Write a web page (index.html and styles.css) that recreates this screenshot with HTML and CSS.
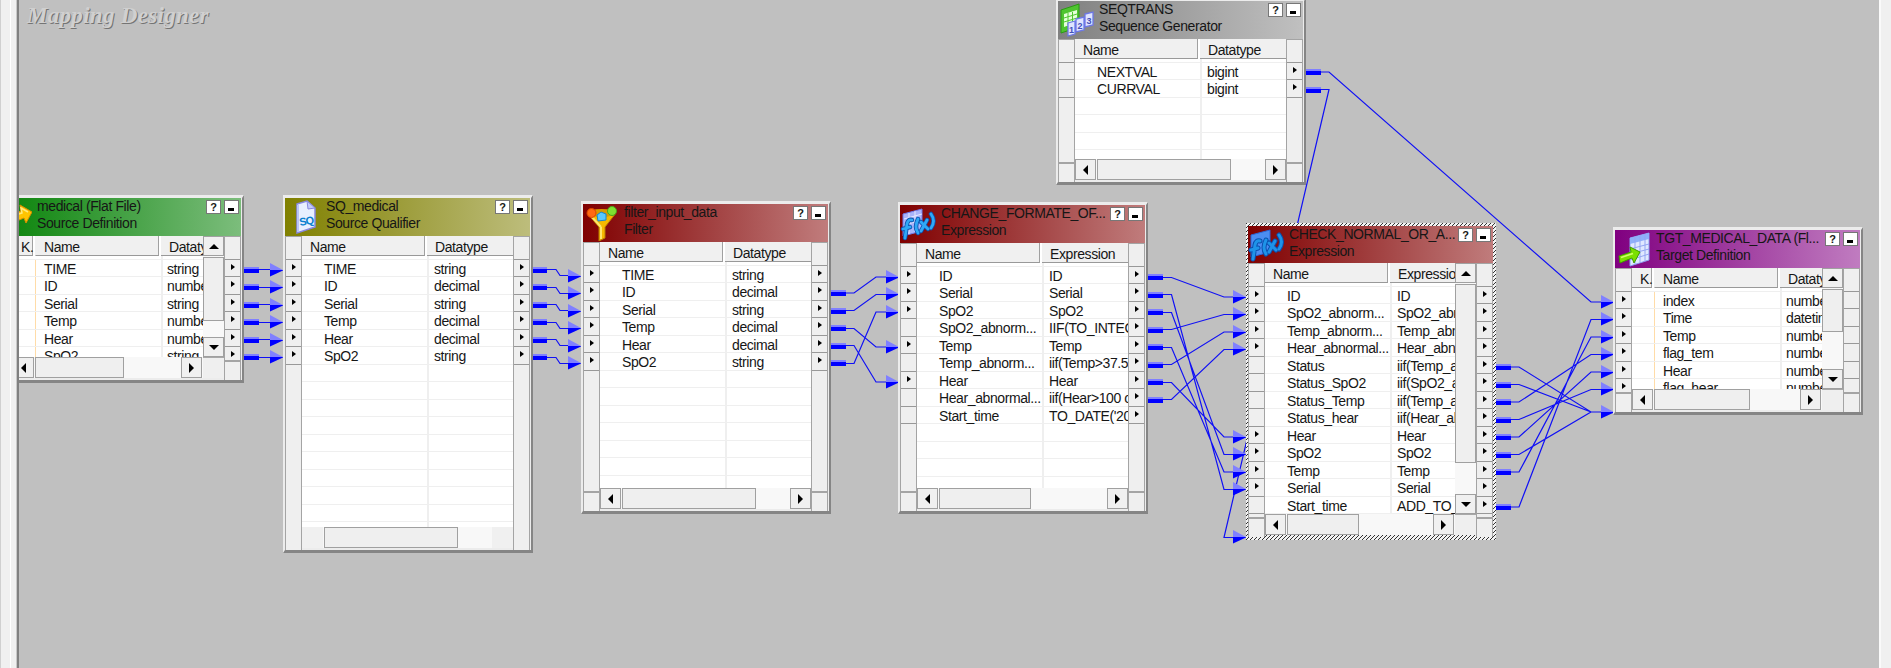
FILE: index.html
```html
<!DOCTYPE html>
<html lang="en">
<head>
<meta charset="utf-8">
<title>Mapping Designer</title>
<link rel="stylesheet" href="styles.css">
</head>
<body>
<div class="app">
<div class="rail"><i></i></div>
<main class="canvas">
<h1 class="heading">Mapping Designer</h1>

<svg class="wires" width="1860" height="668" viewBox="19 0 1860 668">
<defs>
<g id="s"><rect y="-3" width="15" height="2" fill="#8080ff"/><rect y="-1" width="15" height="4" fill="#00f"/></g>
<g id="a"><path d="M-13-7V0H0z" fill="#8080ff"/><path d="M-13 0V6.500L0 .5V0z" fill="#00f"/></g>
</defs>
<g class="lines">
<path d="M244 269.500H272M244 287.500H272M244 304.500H272M244 322.500H272M244 339.500H272M244 357.500H272"/>
<path d="M533 269.500H556L560 275.500H570M533 287.500H556L560 293.500H570M533 304.500H556L560 310.500H570M533 322.500H556L560 328.500H570M533 339.500H556L560 345.500H570M533 357.500H556L560 363.500H570"/>
<path d="M832 293H854L876 277H888M832 310.500H854L876 294.500H888M832 328.500H854L876 347H888M832 345.500H854L876 382H888M832 363.500H854L876 312H888"/>
<path d="M1148 277.500H1171.500L1224 297H1235M1148 294.500H1171.500L1224 489.500H1235M1148 312.500H1171.500L1224 454.500H1235M1148 329.500H1171.500L1224 314.500H1235M1148 347.500H1171.500L1224 472H1235M1148 364.500H1171.500L1224 332H1235M1148 382.500H1171.500L1224 437H1235M1148 399.500H1171.500L1224 349.500H1235"/>
<path d="M1306 72H1329L1591 302H1603M1306 89.500H1329L1224 537.500H1235"/>
<path d="M1496 367H1519L1591 412H1603M1496 384.500H1519L1591 412M1496 402H1519L1591 354.500H1603M1496 419.500H1519L1591 389.500H1603M1496 437H1519L1591 372H1603M1496 454.500H1519L1591 412M1496 472H1519L1591 337H1603M1496 507H1519L1591 319.500H1603"/>
</g>
<use href="#s" x="244" y="270"/><use href="#s" x="244" y="287"/><use href="#s" x="244" y="305"/><use href="#s" x="244" y="322"/><use href="#s" x="244" y="340"/><use href="#s" x="244" y="357"/>
<use href="#a" x="283" y="270"/><use href="#a" x="283" y="287"/><use href="#a" x="283" y="305"/><use href="#a" x="283" y="322"/><use href="#a" x="283" y="340"/><use href="#a" x="283" y="357"/>
<use href="#s" x="532" y="270"/><use href="#s" x="532" y="287"/><use href="#s" x="532" y="305"/><use href="#s" x="532" y="322"/><use href="#s" x="532" y="340"/><use href="#s" x="532" y="357"/>
<use href="#a" x="581" y="276"/><use href="#a" x="581" y="293"/><use href="#a" x="581" y="311"/><use href="#a" x="581" y="328"/><use href="#a" x="581" y="346"/><use href="#a" x="581" y="363"/>
<use href="#s" x="831" y="293"/><use href="#s" x="831" y="311"/><use href="#s" x="831" y="328"/><use href="#s" x="831" y="346"/><use href="#s" x="831" y="363"/>
<use href="#a" x="899" y="277"/><use href="#a" x="899" y="294"/><use href="#a" x="899" y="312"/><use href="#a" x="899" y="347"/><use href="#a" x="899" y="382"/>
<use href="#s" x="1148" y="277"/><use href="#s" x="1148" y="295"/><use href="#s" x="1148" y="312"/><use href="#s" x="1148" y="330"/><use href="#s" x="1148" y="347"/><use href="#s" x="1148" y="365"/><use href="#s" x="1148" y="382"/><use href="#s" x="1148" y="400"/>
<use href="#a" x="1246" y="297"/><use href="#a" x="1246" y="314"/><use href="#a" x="1246" y="332"/><use href="#a" x="1246" y="349"/><use href="#a" x="1246" y="437"/><use href="#a" x="1246" y="454"/><use href="#a" x="1246" y="472"/><use href="#a" x="1246" y="489"/><use href="#a" x="1246" y="537"/>
<use href="#s" x="1306" y="72"/><use href="#s" x="1306" y="90"/>
<use href="#s" x="1496" y="367"/><use href="#s" x="1496" y="385"/><use href="#s" x="1496" y="402"/><use href="#s" x="1496" y="420"/><use href="#s" x="1496" y="437"/><use href="#s" x="1496" y="455"/><use href="#s" x="1496" y="472"/><use href="#s" x="1496" y="507"/>
<use href="#a" x="1614" y="302"/><use href="#a" x="1614" y="319"/><use href="#a" x="1614" y="337"/><use href="#a" x="1614" y="354"/><use href="#a" x="1614" y="372"/><use href="#a" x="1614" y="389"/><use href="#a" x="1614" y="412"/>
</svg>

<section class="win w-medical">
<header class="title green">
<svg class="icon" viewBox="0 0 36 36"><path d="M16 15l9-3-1-6 12 7-6 11-2-5-12 5z" fill="#ffc400" stroke="#d98a00"/><path d="M17 17l9-3-1-5 7 4" fill="none" stroke="#ffe97a" stroke-width="1.500"/></svg>
<div class="names"><b>medical (Flat File)</b><b>Source Definition</b></div><div class="tools"><span>?</span><span class="min"></span></div></header>
<div class="body">
<div class="ports"><i></i><em></em></div>
<div class="content"><div class="view"><div class="table three">
<div class="row head"><span>K.</span><span>Name</span><span>Datatype</span></div>
<div class="row"><span></span><span>TIME</span><span>string</span></div>
<div class="row"><span></span><span>ID</span><span>number</span></div>
<div class="row"><span></span><span>Serial</span><span>string</span></div>
<div class="row"><span></span><span>Temp</span><span>number</span></div>
<div class="row"><span></span><span>Hear</span><span>number</span></div>
<div class="row"><span></span><span>SpO2</span><span>string</span></div>
</div><div class="vbar"><i class="up"></i><u class="t64"></u><i class="down"></i></div></div>
<div class="hbar"><i class="left"></i><u class="t88"></u><i class="right"></i><s></s></div></div>
<div class="ports"><i></i><p></p><p></p><p></p><p></p><p></p><p></p><em></em></div>
</div></section>

<section class="win w-sq">
<header class="title olive">
<svg class="icon" viewBox="0 0 36 36"><path d="M12 5l10-3 8 7v19L12 34z" fill="#e8efff" stroke="#8888e0" stroke-width="1.500"/><path d="M22 2l1 8 7-1z" fill="#c3ccf8" stroke="#8888e0"/><path d="M13 33V6" stroke="#b8c4f8" stroke-width="2"/><text x="15" y="27" class="sq" transform="rotate(-10 15 27)">SQ</text></svg>
<div class="names"><b>SQ_medical</b><b>Source Qualifier</b></div><div class="tools"><span>?</span><span class="min"></span></div></header>
<div class="body">
<div class="ports"><i></i><p></p><p></p><p></p><p></p><p></p><p></p></div>
<div class="content"><div class="view"><div class="table">
<div class="row head"><span>Name</span><span>Datatype</span></div>
<div class="row"><span>TIME</span><span>string</span></div>
<div class="row"><span>ID</span><span>decimal</span></div>
<div class="row"><span>Serial</span><span>string</span></div>
<div class="row"><span>Temp</span><span>decimal</span></div>
<div class="row"><span>Hear</span><span>decimal</span></div>
<div class="row"><span>SpO2</span><span>string</span></div>
<div class="row"></div><div class="row"></div><div class="row"></div><div class="row"></div><div class="row"></div><div class="row"></div><div class="row"></div><div class="row"></div><div class="row"></div><div class="row"></div>
</div></div>
<div class="hbar"><i class="none"></i><u class="t133"></u><i class="none"></i></div></div>
<div class="ports"><i></i><p></p><p></p><p></p><p></p><p></p><p></p></div>
</div></section>

<section class="win w-filter">
<header class="title red">
<svg class="icon" viewBox="0 0 36 36"><path d="M4 8h29L22 22v11l-6 3V22z" fill="#f5b800" stroke="#b97d00"/><ellipse cx="18.500" cy="8" rx="14" ry="4" fill="#d99a00"/><path d="M18 22v12" stroke="#ffe56b" stroke-width="2"/><path d="M8 11l10 11" stroke="#ffe56b" stroke-width="2"/><circle cx="8.500" cy="8" r="4.500" fill="#ff6a13" stroke="#d94400"/><circle cx="29" cy="6" r="4.500" fill="#7fe030" stroke="#4aa51a"/><path d="M14 10l4-3 5 2v6l-8 1z" fill="#58c8ff" stroke="#1687cc"/></svg>
<div class="names"><b>filter_input_data</b><b>Filter</b></div><div class="tools"><span>?</span><span class="min"></span></div></header>
<div class="body">
<div class="ports"><i></i><p></p><p></p><p></p><p></p><p></p><p></p><em></em></div>
<div class="content"><div class="view"><div class="table">
<div class="row head"><span>Name</span><span>Datatype</span></div>
<div class="row"><span>TIME</span><span>string</span></div>
<div class="row"><span>ID</span><span>decimal</span></div>
<div class="row"><span>Serial</span><span>string</span></div>
<div class="row"><span>Temp</span><span>decimal</span></div>
<div class="row"><span>Hear</span><span>decimal</span></div>
<div class="row"><span>SpO2</span><span>string</span></div>
<div class="row"></div><div class="row"></div><div class="row"></div><div class="row"></div><div class="row"></div><div class="row"></div><div class="row"></div>
</div></div>
<div class="hbar"><i class="left"></i><u class="t133"></u><i class="right"></i></div></div>
<div class="ports"><i></i><p></p><p></p><p></p><p></p><p></p><p></p><em></em></div>
</div></section>

<section class="win w-change">
<header class="title red">
<svg class="icon" viewBox="0 0 36 36"><path d="M3 8l19-5v22L3 30z" fill="#aab4fa" stroke="#6f7ae8"/><path d="M4 13l18-5M4 19l18-5M9 7v21M15 5v21" stroke="#e6eaff"/><g fill="none" stroke="#0a4fae" stroke-width="4.500" stroke-linecap="round"><path d="M12 14q-4-1-5 4L5 32M3 23l7-2M18 13q-4 8 0 14M21 16l7 7M27 14l-6 11M31 8q5 7 0 14"/></g><g fill="none" stroke="#2fa8f5" stroke-width="2.800" stroke-linecap="round"><path d="M12 14q-4-1-5 4L5 32M3 23l7-2M18 13q-4 8 0 14M21 16l7 7M27 14l-6 11M31 8q5 7 0 14"/></g></svg>
<div class="names"><b>CHANGE_FORMATE_OF...</b><b>Expression</b></div><div class="tools"><span>?</span><span class="min"></span></div></header>
<div class="body">
<div class="ports"><i></i><p></p><p></p><p></p><p class="no"></p><p></p><p class="no"></p><p></p><p class="no"></p><p class="no"></p><em></em></div>
<div class="content"><div class="view"><div class="table">
<div class="row head"><span>Name</span><span>Expression</span></div>
<div class="row"><span>ID</span><span>ID</span></div>
<div class="row"><span>Serial</span><span>Serial</span></div>
<div class="row"><span>SpO2</span><span>SpO2</span></div>
<div class="row"><span>SpO2_abnorm...</span><span>IIF(TO_INTEG</span></div>
<div class="row"><span>Temp</span><span>Temp</span></div>
<div class="row"><span>Temp_abnorm...</span><span>iif(Temp&gt;37.5</span></div>
<div class="row"><span>Hear</span><span>Hear</span></div>
<div class="row"><span>Hear_abnormal...</span><span>iif(Hear&gt;100 o</span></div>
<div class="row"><span>Start_time</span><span>TO_DATE('20</span></div>
<div class="row"></div><div class="row"></div><div class="row"></div><div class="row"></div>
</div></div>
<div class="hbar"><i class="left"></i><u class="t91"></u><i class="right"></i></div></div>
<div class="ports"><i></i><p></p><p></p><p></p><p></p><p></p><p></p><p></p><p></p><p></p><em></em></div>
</div></section>

<section class="win w-seq">
<header class="title gray">
<svg class="icon" viewBox="0 0 36 36"><path d="M3 8l18-6v23L3 31z" fill="#4fc52f" stroke="#2b9a14"/><path d="M6 12l13-4v12L6 25z" fill="#e5ffd9"/><path d="M6 16l13-4M6 20l13-4M10 11v12M14.500 10v11" stroke="#4fc52f"/><g fill="#dfe4ff" stroke="#6d78e6" stroke-width="1.300"><path d="M10 21l7-2v13l-7 2zM18 17l8-2v13l-8 2zM27 12l8-2v13l-8 2z"/></g><g class="digit"><text x="11" y="31">1</text><text x="19.500" y="27">2</text><text x="28.500" y="22">3</text></g></svg>
<div class="names"><b>SEQTRANS</b><b>Sequence Generator</b></div><div class="tools"><span>?</span><span class="min"></span></div></header>
<div class="body">
<div class="ports"><i></i><p class="no"></p><p class="no"></p><em></em></div>
<div class="content"><div class="view"><div class="table">
<div class="row head"><span>Name</span><span>Datatype</span></div>
<div class="row"><span>NEXTVAL</span><span>bigint</span></div>
<div class="row"><span>CURRVAL</span><span>bigint</span></div>
<div class="row"></div><div class="row"></div><div class="row"></div><div class="row"></div>
</div></div>
<div class="hbar"><i class="left"></i><u class="t133"></u><i class="right"></i></div></div>
<div class="ports"><i></i><p></p><p></p><em></em></div>
</div></section>

<section class="win w-check selected">
<header class="title red">
<svg class="icon" viewBox="0 0 36 36"><path d="M3 8l19-5v22L3 30z" fill="#4b8df2" stroke="#2a66d8"/><g fill="none" stroke="#0a4fae" stroke-width="5" stroke-linecap="round"><path d="M12 14q-4-1-5 4L5 32M3 23l7-2M18 13q-4 8 0 14M21 16l7 7M27 14l-6 11M31 8q5 7 0 14"/></g><g fill="none" stroke="#1e93e8" stroke-width="3" stroke-linecap="round"><path d="M12 14q-4-1-5 4L5 32M3 23l7-2M18 13q-4 8 0 14M21 16l7 7M27 14l-6 11M31 8q5 7 0 14"/></g></svg>
<div class="names"><b>CHECK_NORMAL_OR_A...</b><b>Expression</b></div><div class="tools"><span>?</span><span class="min"></span></div></header>
<div class="body">
<div class="ports"><i></i><p></p><p></p><p></p><p></p><p class="no"></p><p class="no"></p><p class="no"></p><p class="no"></p><p></p><p></p><p></p><p></p><p class="no"></p><em></em></div>
<div class="content"><div class="view"><div class="table">
<div class="row head"><span>Name</span><span>Expression</span></div>
<div class="row"><span>ID</span><span>ID</span></div>
<div class="row"><span>SpO2_abnorm...</span><span>SpO2_abn</span></div>
<div class="row"><span>Temp_abnorm...</span><span>Temp_abn</span></div>
<div class="row"><span>Hear_abnormal...</span><span>Hear_abn</span></div>
<div class="row"><span>Status</span><span>iif(Temp_a</span></div>
<div class="row"><span>Status_SpO2</span><span>iif(SpO2_a</span></div>
<div class="row"><span>Status_Temp</span><span>iif(Temp_a</span></div>
<div class="row"><span>Status_hear</span><span>iif(Hear_ab</span></div>
<div class="row"><span>Hear</span><span>Hear</span></div>
<div class="row"><span>SpO2</span><span>SpO2</span></div>
<div class="row"><span>Temp</span><span>Temp</span></div>
<div class="row"><span>Serial</span><span>Serial</span></div>
<div class="row"><span>Start_time</span><span>ADD_TO_</span></div>
</div><div class="vbar"><i class="up"></i><u class="t177"></u><i class="down"></i></div></div>
<div class="hbar"><i class="left"></i><u class="t71"></u><i class="right"></i><s></s></div></div>
<div class="ports"><i></i><p></p><p></p><p></p><p></p><p></p><p></p><p></p><p></p><p></p><p></p><p></p><p></p><p></p><em></em></div>
</div></section>

<section class="win w-tgt">
<header class="title purple">
<svg class="icon" viewBox="0 0 36 36"><path d="M15 7l19-5v27l-19 6z" fill="#dfe8ff" stroke="#8a9cf0"/><path d="M15 7l19-5v6l-19 5z" fill="#8fb0fa"/><path d="M15 18l19-5M15 23l19-5M15 29l19-6M20 6v27M25 4v27M30 3v27" stroke="#93a5f2"/><path d="M4 25l12-4-1-5 10 5-6 11-2-5-12 5z" fill="#7be000" stroke="#3f9a00"/><path d="M6 26.500l12-4" stroke="#d2ff6a" stroke-width="1.500"/></svg>
<div class="names"><b>TGT_MEDICAL_DATA (Fl...</b><b>Target Definition</b></div><div class="tools"><span>?</span><span class="min"></span></div></header>
<div class="body">
<div class="ports"><i></i><p></p><p></p><p></p><p></p><p></p><p></p><em></em></div>
<div class="content"><div class="view"><div class="table three">
<div class="row head"><span>K.</span><span>Name</span><span>Datatype</span></div>
<div class="row"><span></span><span>index</span><span>number</span></div>
<div class="row"><span></span><span>Time</span><span>datetim</span></div>
<div class="row"><span></span><span>Temp</span><span>number</span></div>
<div class="row"><span></span><span>flag_tem</span><span>number</span></div>
<div class="row"><span></span><span>Hear</span><span>number</span></div>
<div class="row"><span></span><span>flag_hear</span><span>number</span></div>
</div><div class="vbar"><i class="up"></i><u class="t42"></u><i class="down"></i></div></div>
<div class="hbar"><i class="left"></i><u class="t95"></u><i class="right"></i><s></s></div></div>
<div class="ports"><i></i><p class="no"></p><p class="no"></p><p class="no"></p><p class="no"></p><p class="no"></p><p class="no"></p><em></em></div>
</div></section>
</main>
</div>
</body>
</html>
```
FILE: styles.css
```css
* { box-sizing: border-box; }
body { margin: 0; background: #f0f0f0; font-family: "Liberation Sans", Arial, sans-serif; font-size: 14px; color: #161616; }
.app { display: flex; height: 668px; overflow: hidden; }
.rail { width: 17px; flex: none; border-left: 1px solid #d0d0d0; border-right: 1px solid #c8c8c8; background: #f0f0f0; padding-left: 9px; }
.rail i { display: block; width: 1px; height: 100%; background: #fff; }
.canvas { position: relative; width: 1864px; flex: none; overflow: hidden; background: #c0c0c0; border-left: 2px solid #808080; border-right: 2px solid #fafafa; }
.heading { margin: 3px 0 0 8px; font: italic bold 23px/26px "Liberation Serif", "Times New Roman", serif; letter-spacing: 0.300px; color: #d0d0d0; text-shadow: 1px 1px 0 #747474; }
.wires { position: absolute; left: 0; top: 0; }
.lines { fill: none; stroke: #1010f5; stroke-width: 1.200; }

/* Transformation windows placed on the free canvas */
.win { position: absolute; width: 250px; display: flex; flex-direction: column; border: solid; border-width: 3px 2px 3px 2px; border-color: #ececec #858585 #858585 #ececec; padding-right: 1px; background: #ececec; }
.w-medical { left: -25px; top: 195px; height: 188px; }
.w-sq { left: 264px; top: 195px; height: 358px; }
.w-filter { left: 562px; top: 201px; height: 313px; }
.w-change { left: 879px; top: 202px; height: 312px; }
.w-seq { left: 1037px; top: -2px; height: 187px; }
.w-check { left: 1227px; top: 223px; height: 317px; }
.w-tgt { left: 1594px; top: 227px; height: 188px; }
.selected { border: 0; padding: 3px 3px 3px 2px; background: repeating-linear-gradient(135deg, #333 0 1px, #f2f2f2 1px 2.830px); }

.title { height: 38px; flex: none; display: flex; }
.selected .title { height: 37px; }
.green { background: linear-gradient(90deg, #078207, #7cbd7c); }
.olive { background: linear-gradient(90deg, #808000, #bdbd7c); }
.red { background: linear-gradient(90deg, #800000, #c07c7c); }
.gray { background: linear-gradient(90deg, #808080, #c0c0c0); }
.purple { background: linear-gradient(90deg, #800080, #c07cc0); }
.icon { width: 36px; height: 36px; margin: 1px 5px 0 0; flex: none; }
.sq { font: bold 11px "Liberation Sans", sans-serif; fill: #0a7fd0; letter-spacing: -1px; }
.digit { font: bold 9px "Liberation Sans", sans-serif; fill: #4450b8; }
.names { flex: 1; min-width: 0; white-space: nowrap; }
.names b { display: block; font-weight: normal; line-height: 16.500px; letter-spacing: -0.400px; }
.tools { display: flex; gap: 3px; padding: 2px 2px 0 0; }
.tools span { width: 15px; height: 14px; border: 1px solid #777; background: #fff; font: bold 11px/12px "Liberation Sans", sans-serif; text-align: center; }
.tools .min::after { content: ""; display: block; width: 6px; height: 3px; margin: 7px 0 0 3px; background: #000; }

.body { flex: 1; min-height: 0; display: grid; grid-template-columns: 17px 211px 17px; }
.ports { background: #efefef; border: solid #a4a4a4; border-width: 1px 1px 0; display: flex; flex-direction: column; min-height: 0; overflow: hidden; position: relative; }
.ports i { height: 22.500px; flex: none; border-bottom: 1px solid #989898; }
.ports p { margin: 0; height: 17.500px; flex: none; border-bottom: 1px solid #989898; padding: 4px 0 0 6px; }
.ports p::after { content: ""; display: block; width: 0; border: solid transparent; border-width: 3.500px 0 3.500px 4px; border-left-color: #000; }
.ports .no::after { display: none; }
.ports em { position: absolute; left: 0; right: 0; bottom: 0; height: 20px; background: #efefef; border-top: 2px solid #a4a4a4; }
.content { display: flex; flex-direction: column; min-height: 0; min-width: 0; padding-bottom: 2px; }
.view { flex: 1; min-height: 0; display: flex; overflow: hidden; background: #fff; }
.table { flex: 1; min-width: 0; overflow: hidden; background: linear-gradient(#efefef, #efefef) 125px 0 / 2px 100% no-repeat #fff; }
.three { background-position: 148px 0; }
.row { display: grid; grid-template-columns: 125px 1fr; height: 17.500px; border-bottom: 1px solid #efefef; line-height: 18.500px; letter-spacing: -0.400px; white-space: nowrap; }
.row span { padding-left: 22px; min-width: 0; height: 16.500px; }
.row span:last-child { padding-left: 7px; }
.head { height: 23.500px; line-height: 23px; border-bottom-color: #efefef; }
.row.head span { height: 20px; padding-left: 8px; background: #f0f0f0; border-right: 1px solid #a0a0a0; border-bottom: 1px solid #999; margin-right: 2px; }
.row.head span:last-child { border-right: 0; margin-right: 0; }
.three .row { grid-template-columns: 22px 126px 1fr; }
.three .row span:nth-child(2) { padding-left: 8px; border-left: 1px solid #ffdca8; }
.three .head span:nth-child(2) { border-left-color: #f0f0f0; }
.three .row:not(.head) span:last-child { padding-left: 6px; }

.hbar { height: 21px; flex: none; display: flex; background: #f8f8f8; }
.vbar { width: 21px; flex: none; display: flex; flex-direction: column; background: #f8f8f8; }
.hbar i, .vbar i { width: 21px; height: 20px; flex: none; display: grid; place-items: center; background: #f0f0f0; border: 1px solid #a0a0a0; }
.hbar i { height: 21px; }
.hbar i::after, .vbar i::after { content: ""; border: 5px solid transparent; }
.hbar .left::after { border-right-color: #000; border-left: 0; }
.hbar .right::after { border-left-color: #000; border-right: 0; }
.vbar .up::after { border-bottom-color: #000; border-top: 0; }
.vbar .down::after { border-top-color: #000; border-bottom: 0; }
.hbar i:nth-of-type(2) { margin-left: auto; }
.vbar i:nth-of-type(2) { margin-top: auto; }
.hbar .none { border: 0; }
.hbar .none::after { display: none; }
.hbar u, .vbar u { background: #efefef; border: 1px solid #a0a0a0; margin-left: 1px; }
.vbar u { margin: 1px 0 0; }
.hbar s { width: 21px; margin-left: 1px; background: #efefef; border-top: 1px solid #a8a8a8; }
.t133 { width: 134px; } .t88 { width: 89px; } .t91 { width: 92px; } .t71 { width: 72px; } .t95 { width: 96px; }
.t64 { height: 64px; } .t177 { height: 179px; } .t42 { height: 43px; }
```
